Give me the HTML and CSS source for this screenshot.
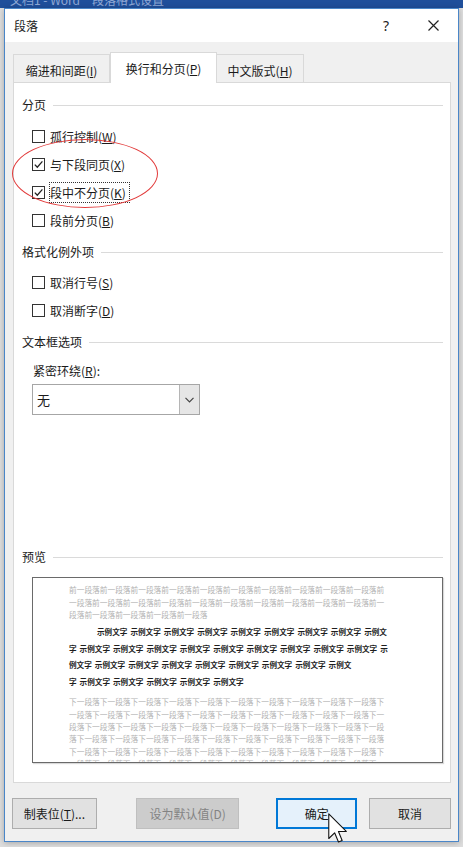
FILE: index.html
```html
<!DOCTYPE html>
<html lang="zh-CN">
<head>
<meta charset="utf-8">
<title>段落</title>
<link rel="stylesheet" href="styles.css">
</head>
<body>
<div class="app-strip"><span class="app-title">文档1 - Word　段落格式设置</span></div>
<div class="dialog">
  <div class="titlebar">
    <span class="title">段落</span>
    <span class="help">?</span>
    <span class="close"><svg width="11" height="11" viewBox="0 0 11 11"><path d="M0.5 0.5L10.5 10.5M10.5 0.5L0.5 10.5" stroke="#222" stroke-width="1.2" fill="none"/></svg></span>
  </div>
  <div class="dlg-body">
    <div class="tabs">
      <div class="tab tab-indent">缩进和间距(<u>I</u>)</div>
      <div class="tab tab-break active">换行和分页(<u>P</u>)</div>
      <div class="tab tab-asian">中文版式(<u>H</u>)</div>
    </div>
    <div class="panel">
      <div class="sec-head">分页</div>
      <div class="checks checks-first">
        <div class="chk"><span class="box"></span><span class="lbl">孤行控制(<u>W</u>)</span></div>
        <div class="chk"><span class="box"><svg width="11" height="11" viewBox="0 0 11 11"><path d="M1.8 5.6L4.3 8.2L9.4 2.4" stroke="#222" stroke-width="1.3" fill="none"/></svg></span><span class="lbl">与下段同页(<u>X</u>)</span></div>
        <div class="chk"><span class="box"><svg width="11" height="11" viewBox="0 0 11 11"><path d="M1.8 5.6L4.3 8.2L9.4 2.4" stroke="#222" stroke-width="1.3" fill="none"/></svg></span><span class="lbl focus">段中不分页(<u>K</u>)</span></div>
        <div class="chk"><span class="box"></span><span class="lbl">段前分页(<u>B</u>)</span></div>
      </div>
      <div class="sec-head sec-gap">格式化例外项</div>
      <div class="checks checks-second">
        <div class="chk"><span class="box"></span><span class="lbl">取消行号(<u>S</u>)</span></div>
        <div class="chk"><span class="box"></span><span class="lbl">取消断字(<u>D</u>)</span></div>
      </div>
      <div class="sec-head sec-gap">文本框选项</div>
      <div class="field-label">紧密环绕(<u>R</u>):</div>
      <div class="combo">
        <span class="combo-val">无</span>
        <span class="combo-btn"><svg width="9" height="6" viewBox="0 0 9 6"><path d="M0.5 0.8L4.5 4.8L8.5 0.8" stroke="#444" stroke-width="1.2" fill="none"/></svg></span>
      </div>
      <div class="sec-head preview-head">预览</div>
      <div class="preview">
        <div class="pv-prev">
          <div>前一段落前一段落前一段落前一段落前一段落前一段落前一段落前一段落前一段落前一段落前</div>
          <div>一段落前一段落前一段落前一段落前一段落前一段落前一段落前一段落前一段落前一段落前一</div>
          <div>段落前一段落前一段落前一段落前一段落</div>
        </div>
        <div class="pv-sample">
          <div class="pv-indent">示例文字 示例文字 示例文字 示例文字 示例文字 示例文字 示例文字 示例文字 示例文</div>
          <div>字 示例文字 示例文字 示例文字 示例文字 示例文字 示例文字 示例文字 示例文字 示例文字 示</div>
          <div>例文字 示例文字 示例文字 示例文字 示例文字 示例文字 示例文字 示例文字 示例文</div>
          <div>字 示例文字 示例文字 示例文字 示例文字 示例文字</div>
        </div>
        <div class="pv-next">
          <div>下一段落下一段落下一段落下一段落下一段落下一段落下一段落下一段落下一段落下一段落下</div>
          <div>一段落下一段落下一段落下一段落下一段落下一段落下一段落下一段落下一段落下一段落下一</div>
          <div>段落下一段落下一段落下一段落下一段落下一段落下一段落下一段落下一段落下一段落下一段</div>
          <div>落下一段落下一段落下一段落下一段落下一段落下一段落下一段落下一段落下一段落下一段落</div>
          <div>下一段落下一段落下一段落下一段落下一段落下一段落下一段落下一段落下一段落下一段落下</div>
          <div>一段落下一段落下一段落下一段落下一段落下一段落下一段落下一段落下一段落下一段落下一</div>
        </div>
      </div>
    </div>
    <div class="buttons">
      <button class="btn btn-tabs">制表位(<u>T</u>)...</button>
      <button class="btn btn-default" disabled>设为默认值(D)</button>
      <button class="btn btn-ok">确定</button>
      <button class="btn btn-cancel">取消</button>
    </div>
  </div>
  <div class="ellipse"></div>
  <svg class="cursor" width="20" height="31" viewBox="0 0 13 20"><path d="M0.5 0.5L0.5 16.5L4.3 12.8L6.8 18.8L9.2 17.8L6.8 11.9L11.9 11.9Z" fill="#fff" stroke="#111" stroke-width="0.7" stroke-linejoin="round"/></svg>
</div>
</body>
</html>
```

FILE: styles.css
```css
* { box-sizing: border-box; margin: 0; padding: 0; }

body {
  margin: 0;
  width: 463px;
  height: 847px;
  overflow: hidden;
  background: #dedede;
  font-family: "Noto Sans CJK SC", "Microsoft YaHei", sans-serif;
  font-size: 12px;
  color: #1a1a1a;
}

.app-strip {
  height: 8px;
  background: #1f4f9b;
  overflow: hidden;
  padding-left: 10px;
}
.app-title {
  display: block;
  color: #8fa9d6;
  font-size: 12px;
  line-height: 12px;
  margin-top: -6px;
}

.dialog {
  position: relative;
  margin-left: 4px;
  width: 455px;
  height: 834px;
  border: 1px solid #4a86c8;
  background: #f0f0f0;
  box-shadow: 0 1px 6px rgba(0, 0, 0, 0.25);
}

.titlebar {
  height: 33px;
  background: #ffffff;
  display: flex;
  align-items: center;
}
.title {
  padding-left: 9px;
  font-size: 12px;
  color: #222;
}
.help {
  margin-left: auto;
  width: 46px;
  text-align: center;
  font-family: "Noto Sans", sans-serif;
  font-size: 14px;
  color: #222;
}
.close {
  width: 49px;
  height: 33px;
  display: flex;
  align-items: center;
  justify-content: center;
}

.dlg-body {
  padding: 10px 7px 0 8px;
}

.tabs {
  height: 30px;
  display: flex;
  align-items: flex-end;
  position: relative;
  z-index: 1;
}
.tab {
  height: 28px;
  border: 1px solid #d9d9d9;
  border-bottom: none;
  background: #f0f0f0;
  display: flex;
  align-items: center;
  justify-content: center;
  padding-top: 3px;
  color: #1a1a1a;
}
.tab + .tab { border-left: none; }
.tab-indent { width: 97px; }
.tab-break { width: 107px; }
.tab-asian { width: 87px; }
.tab.active {
  height: 31px;
  margin-bottom: -1px;
  background: #ffffff;
  border-left: 1px solid #d9d9d9;
  border-right: 1px solid #d9d9d9;
  padding-top: 0;
}
.tab.active + .tab { border-left: none; }

.panel {
  height: 701px;
  border: 1px solid #d9d9d9;
  background: #ffffff;
  padding-top: 14px;
  display: flex;
  flex-direction: column;
  align-items: flex-start;
}

.sec-head {
  align-self: stretch;
  height: 16px;
  display: flex;
  align-items: center;
  padding: 0 7px 0 8px;
  color: #1a1a1a;
  line-height: 16px;
}
.sec-head::after {
  content: "";
  flex: 1;
  height: 1px;
  background: #dadada;
  margin-left: 7px;
}
.sec-gap { margin-top: 10px; }

.checks { padding-left: 18px; }
.checks-first { margin-top: 9px; }
.checks-second { margin-top: 8px; }

.chk {
  height: 28px;
  display: flex;
  align-items: center;
}
.box {
  width: 13px;
  height: 13px;
  border: 1px solid #333;
  background: #fff;
  margin-right: 4px;
  display: flex;
  align-items: center;
  justify-content: center;
}
.lbl {
  padding: 1px 3px 1px 0;
  border: 1px dotted transparent;
  line-height: 17px;
}
.lbl.focus { border-color: #333; }

.field-label {
  margin-top: 13px;
  padding-left: 19px;
  line-height: 16px;
  height: 16px;
}

.combo {
  margin-top: 5px;
  margin-left: 18px;
  width: 168px;
  height: 31px;
  border: 1px solid #a6a6a6;
  background: #fff;
  display: flex;
}
.combo-val {
  flex: 1;
  padding-left: 4px;
  display: flex;
  align-items: center;
  font-size: 13px;
}
.combo-btn {
  width: 20px;
  background: #e6e6e6;
  border-left: 1px solid #b5b5b5;
  display: flex;
  align-items: center;
  justify-content: center;
}

.preview-head { margin-top: 134px; }

.preview {
  margin-top: 12px;
  margin-left: 18px;
  width: 411px;
  height: 186px;
  border: 1px solid #6a6a6a;
  background: #fff;
  overflow: hidden;
  padding: 6px 0 0 36px;
  white-space: nowrap;
  box-shadow: 1px 1px 1px rgba(0, 0, 0, 0.15);
}
.pv-prev, .pv-next {
  font-size: 7.7px;
  line-height: 12.5px;
  color: #b2b2b2;
}
.pv-sample {
  margin-top: 2.5px;
  font-size: 7.6px;
  line-height: 16.6px;
  font-weight: bold;
  color: #1e1e1e;
  word-spacing: 1.3px;
}
.pv-indent { padding-left: 28px; }
.pv-next {
  margin-top: 6px;
  line-height: 12.3px;
}

.buttons {
  margin-top: 15px;
  margin-left: -1px;
  display: flex;
}
.btn {
  height: 31px;
  font-family: "Noto Sans CJK SC", "Microsoft YaHei", sans-serif;
  font-size: 12px;
  color: #1a1a1a;
  background: #e1e1e1;
  border: 1px solid #adadad;
}
.btn-tabs { width: 85px; }
.btn-default {
  width: 104px;
  margin-left: 39px;
  background: #cccccc;
  border-color: #bfbfbf;
  color: #838383;
}
.btn-ok {
  width: 81px;
  margin-left: 37px;
  background: #e5f1fb;
  border: 2px solid #0078d7;
}
.btn-cancel {
  width: 82px;
  margin-left: 12px;
}

.ellipse {
  position: absolute;
  left: 7px;
  top: 130px;
  width: 146px;
  height: 69px;
  border: 1px solid #e23a3a;
  border-radius: 50%;
}

.cursor {
  position: absolute;
  left: 323px;
  top: 804px;
}
```
